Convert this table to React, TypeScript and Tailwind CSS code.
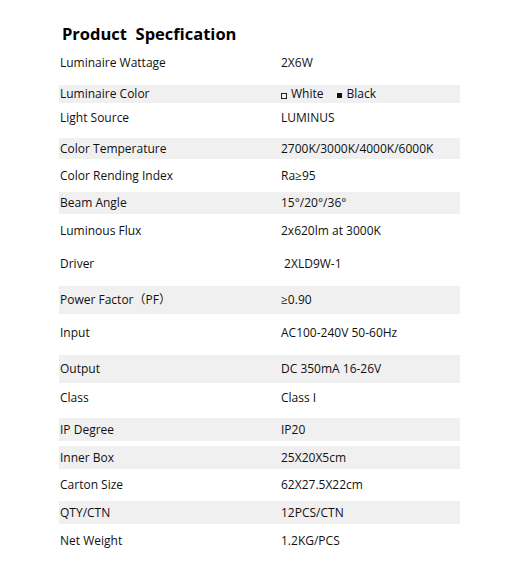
import type { ReactNode } from "react";

type Row = {
  label: string;
  value: ReactNode;
  h: number;
  mt: number;
  grey?: boolean;
};

const colorValue = (
  <span className="flex items-center">
    <span className="inline-block w-[6px] h-[6px] border border-[#222] mt-[3px] mr-[4px]" />
    <span>White</span>
    <span className="inline-block w-[5px] h-[5px] bg-[#111] mt-[3px] ml-[14px] mr-[4px]" />
    <span>Black</span>
  </span>
);

const rows: Row[] = [
  { label: "Luminaire Wattage", value: "2X6W", h: 22, mt: 6 },
  { label: "Luminaire Color", value: colorValue, h: 18, mt: 11, grey: true },
  { label: "Light Source", value: "LUMINUS", h: 21, mt: 4 },
  { label: "Color Temperature", value: "2700K/3000K/4000K/6000K", h: 21, mt: 10, grey: true },
  { label: "Color Rending Index", value: "Ra≥95", h: 22, mt: 6 },
  { label: "Beam Angle", value: "15°/20°/36°", h: 22, mt: 5, grey: true },
  { label: "Luminous Flux", value: "2x620lm at 3000K", h: 21, mt: 6 },
  { label: "Driver", value: " 2XLD9W-1", h: 21, mt: 12 },
  { label: "Power Factor（PF）", value: "≥0.90", h: 28, mt: 12, grey: true },
  { label: "Input", value: "AC100-240V 50-60Hz", h: 21, mt: 8 },
  { label: "Output", value: "DC 350mA 16-26V", h: 28, mt: 12, grey: true },
  { label: "Class", value: "Class I", h: 21, mt: 4 },
  { label: "IP Degree", value: "IP20", h: 23, mt: 10, grey: true },
  { label: "Inner Box", value: "25X20X5cm", h: 23, mt: 5, grey: true },
  { label: "Carton Size", value: "62X27.5X22cm", h: 21, mt: 5 },
  { label: "QTY/CTN", value: "12PCS/CTN", h: 23, mt: 6, grey: true },
  { label: "Net Weight", value: "1.2KG/PCS", h: 21, mt: 6 },
];

export default function App() {
  return (
    <div
      className="w-[516px] h-[563px] bg-white pl-[59px] pt-[22px] text-[#111] overflow-hidden"
      style={{ fontFamily: '"Open Sans", "Noto Sans CJK SC", sans-serif' }}
    >
      <h1 className="h-[24px] leading-[24px] pl-[3px] text-[16.5px] font-bold text-black whitespace-pre">
        Product  Specfication
      </h1>

      <div className="w-[401px] flex flex-col">
        {rows.map((r) => (
          <div
            key={r.label}
            className={`flex items-center text-[12px] ${r.grey ? "bg-[#f0f0f0]" : ""}`}
            style={{ height: r.h, marginTop: r.mt }}
          >
            <span className="w-[222px] pl-px whitespace-pre">{r.label}</span>
            <span className="whitespace-pre">{r.value}</span>
          </div>
        ))}
      </div>
    </div>
  );
}
